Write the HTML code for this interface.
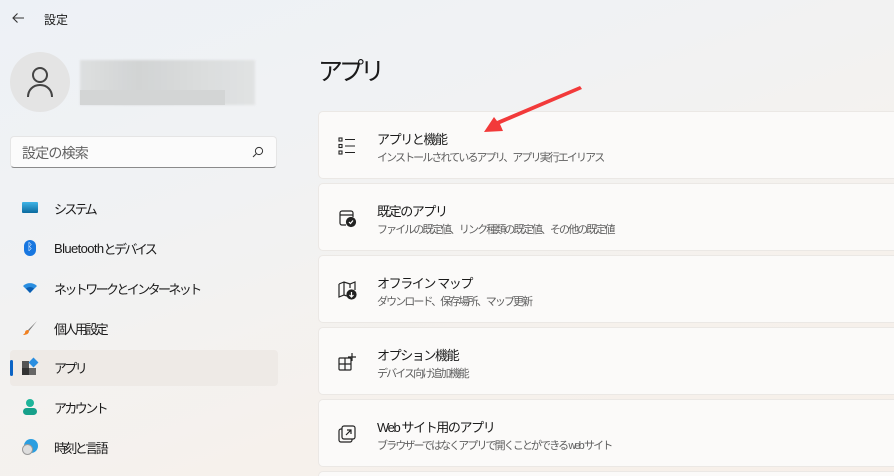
<!DOCTYPE html>
<html style="width:894px;height:476px;overflow:hidden"><head><meta charset="utf-8"><style>
*{margin:0;padding:0;box-sizing:border-box}
body{width:894px;height:476px;overflow:hidden;position:relative;font-family:"Liberation Sans","Noto Sans CJK JP",sans-serif;color:#1a1a1a;
background:linear-gradient(160deg,#edf1f6 0%,#f1f2f3 35%,#f6f1ec 70%,#f7efe9 100%)}
.abs{position:absolute}
.nav{position:absolute;left:10px;width:268px;height:36px;display:flex;align-items:center;font-size:13px;letter-spacing:-2.6px;color:#1b1b1b}
.nav .ic{width:16px;height:16px;margin-left:12px;margin-right:16px;position:relative;flex:none}
.card{position:absolute;left:318px;width:600px;height:68px;background:#fbfaf9;border:1px solid #ebe8e5;border-radius:5px}
.card .t{position:absolute;left:58px;top:17px;font-size:13px;letter-spacing:-1.4px;color:#1a1a1a}
.card .s{position:absolute;left:58px;top:37px;font-size:11px;letter-spacing:-1.9px;color:#5f5f5f}
.card svg{position:absolute;left:18px;top:24px}
</style></head><body>
<svg class="abs" style="left:10px;top:11px" width="16" height="14" viewBox="0 0 16 14"><path d="M14 7H3M7.5 2.5L3 7l4.5 4.5" stroke="#333" stroke-width="1.1" fill="none"/></svg>
<div class="abs" style="left:44px;top:11px;font-size:12px">設定</div>
<div class="abs" style="left:10px;top:52px;width:60px;height:60px;border-radius:50%;background:#e4e4e4"></div>
<svg class="abs" style="left:26px;top:66px" width="28" height="32" viewBox="0 0 28 32"><circle cx="14" cy="9" r="7" stroke="#444" stroke-width="2" fill="none"/><path d="M2 31c0-7 5-12 12-12s12 5 12 12" stroke="#444" stroke-width="2" fill="none"/></svg>
<div class="abs" style="left:80px;top:60px;width:175px;height:45px;background:linear-gradient(90deg,#dcdede,#cfd1d1,#d8dada,#e0e2e2);filter:blur(1px);opacity:.9"></div>
<div class="abs" style="left:80px;top:90px;width:145px;height:15px;background:#d3d5d5"></div>
<div class="abs" style="left:10px;top:136px;width:267px;height:32px;background:#fbfbfb;border:1px solid #e5e5e5;border-bottom:1px solid #8a8a8a;border-radius:4px"></div>
<div class="abs" style="left:22px;top:143px;font-size:14px;letter-spacing:-0.8px;color:#606060">設定の検索</div>
<svg class="abs" style="left:252px;top:146px" width="12" height="12" viewBox="0 0 12 12"><circle cx="7" cy="5" r="3.6" stroke="#333" fill="none"/><path d="M4.3 7.7L1 11" stroke="#333"/></svg>

<div class="nav" style="top:190px"><span class="ic"><span class="abs" style="left:0;top:2px;width:16px;height:11px;background:linear-gradient(#3fb4e6,#0b6a9e);border-radius:1px"></span></span>システム</div>
<div class="nav" style="top:230px"><span class="ic"><span class="abs" style="left:2px;top:0;width:12px;height:16px;background:#1877e0;border-radius:6px;color:#fff;font-size:10px;text-align:center;line-height:16px;letter-spacing:0">ᛒ</span></span><span style="letter-spacing:-0.6px">Bluetooth </span>とデバイス</div>
<div class="nav" style="top:270px"><span class="ic"><svg width="16" height="16" viewBox="0 0 16 16"><path d="M1 6a10 10 0 0114 0L8 13z" fill="#2a8ee0"/><path d="M4 8.5a6 6 0 018 0L8 13z" fill="#0c5db0"/></svg></span>ネットワークとインターネット</div>
<div class="nav" style="top:310px"><span class="ic"><svg width="16" height="16" viewBox="0 0 16 16"><path d="M15 1L6 10l1 1z" fill="#777"/><path d="M6 10c-2 0-3 1-3 3l-2 2c3 0 6-1 6-4z" fill="#f08020"/></svg></span>個人用設定</div>
<div class="abs" style="left:10px;top:350px;width:268px;height:36px;background:#eeeae6;border-radius:4px"></div>
<div class="abs" style="left:10px;top:360px;width:3px;height:16px;background:#0b63c4;border-radius:2px"></div>
<div class="nav" style="top:349px"><span class="ic"><span class="abs" style="left:0;top:2px;width:7px;height:7px;background:#555"></span><span class="abs" style="left:0;top:9px;width:7px;height:7px;background:#333"></span><span class="abs" style="left:7px;top:9px;width:7px;height:7px;background:#666"></span><span class="abs" style="left:8px;top:0;width:7px;height:7px;background:#2a8ee0;transform:rotate(45deg)"></span></span>アプリ</div>
<div class="nav" style="top:389px"><span class="ic"><span class="abs" style="left:4px;top:0;width:8px;height:8px;border-radius:50%;background:#1eb59a"></span><span class="abs" style="left:1px;top:9px;width:14px;height:7px;border-radius:4px;background:#16a08a"></span></span>アカウント</div>
<div class="nav" style="top:429px"><span class="ic"><span class="abs" style="left:2px;top:0;width:14px;height:14px;border-radius:50%;background:#2a9ee0"></span><span class="abs" style="left:0;top:5px;width:11px;height:11px;border-radius:50%;background:#ddd;border:1px solid #999"></span></span>時刻と言語</div>

<div class="abs" style="left:318px;top:52px;font-size:25px;letter-spacing:-4px;color:#1a1a1a">アプリ</div>

<div class="card" style="top:111px"><svg width="20" height="20" viewBox="0 0 20 20" fill="none" stroke="#222" stroke-width="1.1"><rect x="2" y="2" width="3" height="3"/><rect x="2" y="8.5" width="3" height="3"/><rect x="2" y="15" width="3" height="3"/><path d="M8 3.5h10M8 10h10M8 16.5h10"/></svg><div class="t">アプリと機能</div><div class="s">インストールされているアプリ、アプリ実行エイリアス</div></div>
<div class="card" style="top:183px"><svg width="20" height="20" viewBox="0 0 20 20" fill="none" stroke="#222" stroke-width="1.2"><path d="M9 17H5a2 2 0 01-2-2V5a2 2 0 012-2h9a2 2 0 012 2v4M3 7h13"/><circle cx="14" cy="14" r="4.5" fill="#222"/><path d="M12 14l1.5 1.5 2.5-3" stroke="#fff"/></svg><div class="t">既定のアプリ</div><div class="s">ファイルの既定値、リンク種類の既定値、その他の既定値</div></div>
<div class="card" style="top:255px"><svg width="20" height="20" viewBox="0 0 20 20" fill="none" stroke="#222" stroke-width="1.2"><path d="M2 4l5-2 6 2 5-2v8M2 4v13l5-2 3 1M7 2v13M13 4v4"/><circle cx="14.5" cy="14.5" r="4.5" fill="#222"/><path d="M14.5 12v5M12.5 15l2 2 2-2" stroke="#fff"/></svg><div class="t">オフライン マップ</div><div class="s">ダウンロード、保存場所、マップ更新</div></div>
<div class="card" style="top:327px"><svg width="20" height="20" viewBox="0 0 20 20" fill="none" stroke="#222" stroke-width="1.2"><rect x="2" y="6" width="12" height="12" rx="1"/><path d="M8 6v12M2 12h12M15 1v8M11 5h8"/></svg><div class="t">オプション機能</div><div class="s">デバイス向け追加機能</div></div>
<div class="card" style="top:399px"><svg width="20" height="20" viewBox="0 0 20 20" fill="none" stroke="#222" stroke-width="1.2"><rect x="5" y="2" width="13" height="13" rx="2"/><path d="M5 5H4a2 2 0 00-2 2v9a2 2 0 002 2h9a2 2 0 002-2v-1M9 11l5-5M10 6h4v4"/></svg><div class="t">Web サイト用のアプリ</div><div class="s">ブラウザーではなくアプリで開くことができる web サイト</div></div>
<div class="card" style="top:471px;height:5px;border-bottom:none;border-radius:5px 0 0 0"></div>

<svg class="abs" style="left:0;top:0" width="894" height="476"><polygon points="580,86 582,89 500,124 503,131 484,132 494,117 497,121" fill="#f23a3a"/></svg>
</body></html>
